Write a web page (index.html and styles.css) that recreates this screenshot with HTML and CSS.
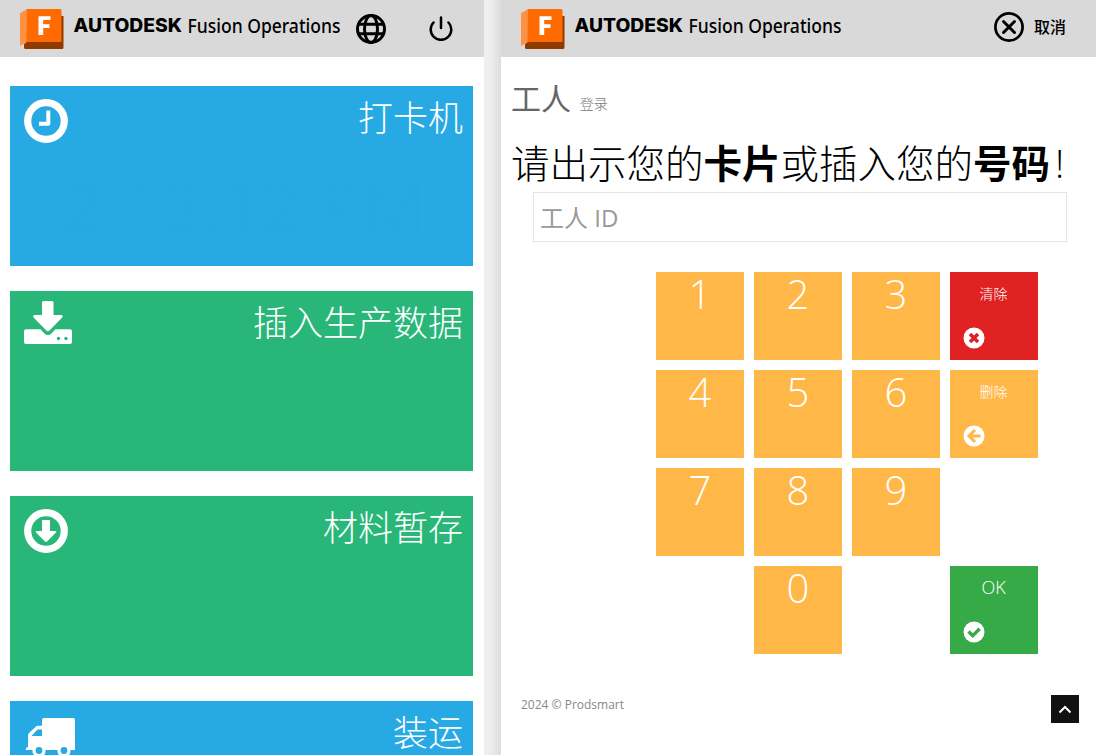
FILE: index.html
```html
<!DOCTYPE html>
<html lang="zh-CN">
<head>
<meta charset="utf-8">
<title>Fusion Operations</title>
<link rel="stylesheet" href="styles.css">
</head>
<body>
<svg class="defs" aria-hidden="true">
  <symbol id="brand" viewBox="0 0 330 50">
    <path fill="#8f3b00" d="M60 16h3.500v31.500a1.500 1.500 0 0 1-1.500 1.500H25.500a1.500 1.500 0 0 1-1.500-1.500V44l4-3z"/>
    <path fill="#ff9145" d="M20 13.200 27 9v33l-7 4z"/>
    <path fill="#ff6b00" d="M27 9h33a1.500 1.500 0 0 1 1.500 1.500V42H26.500z"/>
    <path fill="#8f3b00" d="M27 42h34.500v3.500H24.300z"/>
    <path fill="#fff" d="M38.500 16.200h12v3.800h-7.300v4.300h6.300v3.600h-6.300v7h-4.700z"/>
  </symbol>
</svg>
<div class="app">
  <section class="pane menu">
    <header class="bar">
      <svg class="brand" viewBox="0 0 356 57">
        <use href="#brand" width="330" height="50"/>
        <text class="word-strong" x="73.500" y="32.300" textLength="108.500" lengthAdjust="spacingAndGlyphs">AUTODESK</text>
        <text class="word" x="187.500" y="32.500" textLength="153" lengthAdjust="spacingAndGlyphs">Fusion Operations</text>
      </svg>
      <svg class="globe" viewBox="0 0 30 30"><g fill="none" stroke="#000" stroke-width="3"><circle cx="15" cy="15" r="13.500"/><ellipse cx="15" cy="15" rx="6.500" ry="13.500"/><path d="M2.500 10.200h25M2.500 19.800h25"/></g></svg>
      <svg class="power" viewBox="0 0 24 25"><path d="M12 1.500v10.500M4.500 6.500a10.300 10.300 0 1 0 15 0" fill="none" stroke="#000" stroke-width="2.500" stroke-linecap="round"/></svg>
    </header>
    <main class="tiles">
      <article class="tile blue">
        <svg class="tile-icon" viewBox="0 0 44 44"><circle cx="22" cy="22" r="18.300" fill="none" stroke="#fff" stroke-width="7.200"/><path d="M15 24.800h9.300V11.500" fill="none" stroke="#fff" stroke-width="4" stroke-linejoin="round"/></svg>
        <h2>打卡机</h2>
        <time>2:13:12 PM</time>
      </article>
      <article class="tile green">
        <svg class="tile-icon drive" viewBox="0 0 48 43"><path fill="#fff" d="M19.500 0h8.500q1.500 0 1.500 1.500V14h7.500q2.800.5 1 2.800L25.700 29.300q-1.800 1.800-3.600 0L9.800 16.800Q8.200 14.500 10.800 14H18V1.500Q18 0 19.500 0zM2 28.300h14.500l3.700 3.900q3.700 3.700 7.400 0l3.800-3.900H46q2 0 2 2V41q0 2-2 2H2q-2 0-2-2V30.300q0-2 2-2z"/><g fill="#28b779"><circle cx="34.500" cy="37.500" r="1.700"/><circle cx="42" cy="37.500" r="1.700"/></g></svg>
        <h2>插入生产数据</h2>
      </article>
      <article class="tile green">
        <svg class="tile-icon" viewBox="0 0 44 44"><circle cx="22" cy="22" r="18.300" fill="none" stroke="#fff" stroke-width="7.200"/><path fill="#fff" d="M18.800 11h6.400q.8 0 .8.800V22h5.500q1.500.2.500 1.500l-9 9q-1 .9-2 0l-9-9q-.9-1.300.5-1.500H18V11.800q0-.8.800-.8z"/></svg>
        <h2>材料暂存</h2>
      </article>
      <article class="tile blue">
        <svg class="tile-icon truck" viewBox="0 0 49 39"><path fill="#fff" d="M18 0h29q2 0 2 2v30h-4.500H0v-2l2-1V17.500q0-1.500 1-2.500l6.500-6q1-1.200 2.500-1.200h4V2q0-2 2-2z"/><g fill="#fff"><circle cx="13" cy="33" r="6.500"/><circle cx="38" cy="33" r="6.500"/></g><path fill="#27a9e3" d="M11.500 11.500H16V18H5.500z"/><g fill="#27a9e3"><circle cx="13" cy="32.500" r="3.400"/><circle cx="38" cy="32.500" r="3.400"/></g></svg>
        <h2>装运</h2>
      </article>
    </main>
  </section>
  <div class="divider"></div>
  <section class="pane login">
    <header class="bar">
      <svg class="brand" viewBox="0 0 356 57">
        <use href="#brand" width="330" height="50"/>
        <text class="word-strong" x="73.500" y="32.300" textLength="108.500" lengthAdjust="spacingAndGlyphs">AUTODESK</text>
        <text class="word" x="187.500" y="32.500" textLength="153" lengthAdjust="spacingAndGlyphs">Fusion Operations</text>
      </svg>
      <button class="cancel"><svg viewBox="0 0 30 30"><circle cx="15" cy="15" r="13.600" fill="none" stroke="#000" stroke-width="2.700"/><path d="m9.500 9.500 11 11m0-11-11 11" stroke="#000" stroke-width="3" stroke-linecap="round"/></svg><span>取消</span></button>
    </header>
    <main class="form">
      <h1>工人 <small>登录</small></h1>
      <p class="prompt">请出示您的<b>卡片</b>或插入您的<b>号码</b><span class="bang">!</span></p>
      <input class="worker" type="text" placeholder="工人 ID" aria-label="工人 ID">
      <div class="keys">
        <button>1</button><button>2</button><button>3</button>
        <button class="action red"><span>清除</span><svg viewBox="0 0 22 22"><circle cx="11" cy="11" r="10.500" fill="#fff"/><path d="m7 7 8 8m0-8-8 8" stroke="#e02222" stroke-width="3.600"/></svg></button>
        <button>4</button><button>5</button><button>6</button>
        <button class="action"><span>删除</span><svg viewBox="0 0 22 22"><circle cx="11" cy="11" r="10.500" fill="#fff"/><path d="M17.500 11H6m6-6-6 6 6 6" fill="none" stroke="#ffb848" stroke-width="3"/></svg></button>
        <button>7</button><button>8</button><button>9</button>
        <button class="zero">0</button>
        <button class="action ok"><span>OK</span><svg viewBox="0 0 22 22"><circle cx="11" cy="11" r="10.500" fill="#fff"/><path d="m5.500 10.500 4.200 4.200 7-6.900" fill="none" stroke="#35aa47" stroke-width="3.400"/></svg></button>
      </div>
    </main>
    <footer>
      <span>2024 © Prodsmart</span>
      <button class="top" aria-label="Top"><svg viewBox="0 0 14 9"><path d="m1.500 7.500 5.500-5.500 5.500 5.500" fill="none" stroke="#fff" stroke-width="2"/></svg></button>
    </footer>
  </section>
</div>
</body>
</html>
```
FILE: styles.css
```css
* { box-sizing: border-box; }
body { margin: 0; background: #fff; color: #000; font-family: "Open Sans", "Noto Sans CJK SC", sans-serif; overflow: hidden; }
button { border: 0; margin: 0; padding: 0; font: inherit; background: none; color: inherit; }
svg { display: block; flex: none; }
.defs { display: none; }
.app { display: flex; width: 1097px; height: 755px; overflow: hidden; }
.pane { flex: none; }
.menu { width: 484px; }
.divider { width: 17px; background: linear-gradient(90deg, #f0f0f0, #ececec 45%, #dcdcdc); }
.login { width: 595px; height: 755px; display: flex; flex-direction: column; }
.bar { display: flex; height: 57px; background: #d9d9d9; flex: none; }
.brand { width: 356px; height: 57px; }
.word-strong { font: 800 18.500px Inter, sans-serif; }
.word { font: 500 19px "Noto Sans", sans-serif; }
.globe { width: 30px; height: 30px; margin-top: 14px; }
.power { width: 24px; height: 25px; margin: 16px 0 0 43px; }
.cancel { display: flex; align-items: center; gap: 10px; margin: 0 30px 3px auto; font-size: 16px; font-weight: 500; }
.cancel svg { width: 30px; height: 30px; }
.cancel span { padding-bottom: 2px; }

.tiles { display: grid; gap: 25px; padding: 29px 11px 0 10px; }
.tile { display: grid; grid-template-columns: auto 1fr; grid-template-rows: 80px 1fr; height: 180px; padding: 0 10px 0 14px; color: #fff; }
.blue { background: #27a9e3; }
.green { background: #28b779; }
.tile-icon { width: 44px; height: 44px; margin-top: 13px; }
.drive { width: 48px; height: 43px; margin-top: 10px; }
.truck { width: 49px; height: 39px; margin: 17px 0 0 2px; }
.tile h2 { margin: 6px 0 0; font-size: 35px; line-height: 52px; font-weight: 300; text-align: right; }
.tile time { grid-column: 1 / -1; color: #27a8e2; font-size: 70px; line-height: 80px; text-align: center; font-weight: 600; }

.form { padding: 0 10px; }
h1 { margin: 20px 0 0; height: 44px; line-height: 44px; font-size: 30px; font-weight: 400; color: #666; }
h1 small { position: relative; top: -1px; margin-left: 1px; font-size: 14px; font-weight: 300; color: #777; }
.prompt { margin: 14px 0 0; height: 57px; line-height: 57px; font-size: 38.500px; font-weight: 300; white-space: nowrap; }
.prompt b { font-weight: 700; }
.bang { margin-left: 5px; }
.worker { display: block; width: 534px; height: 50px; margin: 0 0 0 22px; padding: 0 6px; border: 1px solid #e5e5e5; font: 400 24px "Open Sans", "Noto Sans CJK SC", sans-serif; }
.worker::placeholder { color: #999; opacity: 1; }
.keys { display: grid; grid-template-columns: repeat(4, 88px); grid-auto-rows: 88px; gap: 10px; margin: 30px 0 0 145px; }
.keys button { display: flex; flex-direction: column; align-items: center; background: #ffb848; color: #fff; font-size: 40px; line-height: 43px; font-weight: 300; }
.keys .zero { grid-column: 2; grid-row: 4; }
.keys .ok { grid-column: 4; grid-row: 4; background: #35aa47; }
.keys .red { background: #e02222; }
.keys .action { padding-right: 1px; font-size: 14px; line-height: 44px; }
.keys .ok span { height: 44px; font-size: 18px; line-height: 42px; }
.action svg { width: 22px; height: 22px; align-self: flex-start; margin: 11px 0 0 13px; }
footer { display: flex; justify-content: space-between; align-items: flex-start; margin-top: 41px; padding: 0 17px 0 20px; font-size: 12px; line-height: 20px; color: #888; }
.top { display: grid; place-items: center; width: 28px; height: 28px; background: #111; }
.top svg { width: 14px; height: 9px; }
```
